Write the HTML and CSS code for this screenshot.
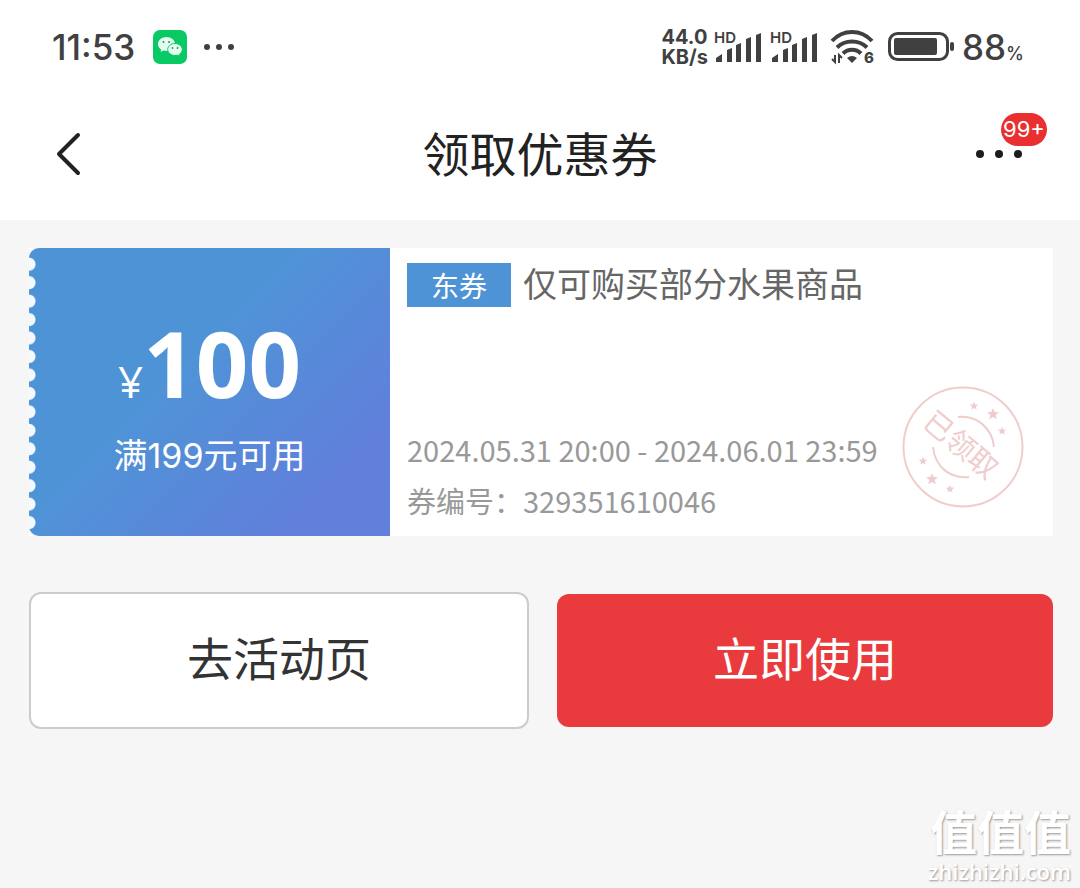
FILE: index.html
```html
<!DOCTYPE html>
<html lang="zh-CN">
<head>
    <meta charset="UTF-8">
    <meta name="viewport" content="width=device-width, initial-scale=1.0">
    <title>领取优惠券</title>
    <link rel="stylesheet" href="styles.css">
</head>
<body>
    <header class="top">
        <div class="status-bar">
            <div class="status-left">
                <span class="clock">11:53</span>
                <svg class="wechat" viewBox="0 0 34 34" width="34" height="34">
                    <rect width="34" height="34" rx="7" fill="#08c964"/>
                    <path d="M13.500 7C8.800 7 5 10.100 5 14c0 2.300 1.200 4.200 3.200 5.500L7.500 22l3-1.600c1 .3 2 .5 3 .5 4.700 0 8.500-3.100 8.500-7S18.200 7 13.500 7z" fill="#e4fdf0"/>
                    <path d="M22 13.500c-4 0-7.300 2.700-7.300 6s3.300 6 7.300 6c.9 0 1.700-.1 2.500-.4l2.500 1.400-.6-2.200c1.800-1.100 2.900-2.900 2.900-4.800 0-3.300-3.300-6-7.300-6z" fill="#e4fdf0" stroke="#08c964"/>
                    <g fill="#08a957">
                        <circle cx="10.500" cy="12" r="1"/><circle cx="16" cy="12" r="1"/>
                        <circle cx="19.500" cy="18" r=".9"/><circle cx="24.500" cy="18" r=".9"/>
                    </g>
                </svg>
                <svg viewBox="0 0 32 8" width="32" height="8" fill="#404040">
                    <circle cx="4" cy="4" r="3"/><circle cx="16" cy="4" r="3"/><circle cx="28" cy="4" r="3"/>
                </svg>
            </div>
            <div class="status-right">
                <div class="speed"><span>44.0</span><span>KB/s</span></div>
                <span class="signal">
                    <span class="hd">HD</span>
                    <svg viewBox="0 0 46 30" width="46" height="30" fill="#404040">
                        <path d="M0 30v-4l6-4v8zM11 30V18l5-2v14zM20 30V13l5-2v19zM30 30V7l5-2v25zM40 30V3l5-2v29z"/>
                    </svg>
                </span>
                <span class="signal">
                    <span class="hd">HD</span>
                    <svg viewBox="0 0 46 30" width="46" height="30" fill="#404040">
                        <path d="M0 30v-4l6-4v8zM11 30V18l5-2v14zM20 30V13l5-2v19zM30 30V7l5-2v25zM40 30V3l5-2v29z"/>
                    </svg>
                </span>
                <svg class="wifi" viewBox="0 0 46 36" width="46" height="36">
                    <g fill="none" stroke="#404040" stroke-width="4">
                        <path d="M2 12C13 0 31 0 42 12"/>
                        <path d="M7 18.500c8-8 22-8 30 0"/>
                        <path d="M13 24.500c5-5 13-5 18 0"/>
                    </g>
                    <path d="M17 29q5-4 10 0l-5 5z" fill="#404040"/>
                    <path d="M5 26v7l-3-3M9 34v-8l3 3" fill="none" stroke="#404040" stroke-width="2"/>
                    <text class="wifi-mark" x="34" y="34">6</text>
                </svg>
                <svg class="battery" viewBox="0 0 66 30" width="66" height="30">
                    <rect x="1.500" y="1.500" width="58" height="26" rx="8" fill="none" stroke="#404040" stroke-width="3"/>
                    <rect x="6" y="6" width="43" height="17" rx="2" fill="#404040"/>
                    <rect x="62" y="10" width="4" height="9" rx="2" fill="#404040"/>
                </svg>
                <span class="percent">88<small>%</small></span>
            </div>
        </div>
        <nav class="nav-bar">
            <button class="nav-button" type="button" aria-label="返回">
                <svg viewBox="0 0 26 44" width="26" height="44">
                    <path d="M23 3L4 22l19 19" fill="none" stroke="#222" stroke-width="4" stroke-linecap="round" stroke-linejoin="round"/>
                </svg>
            </button>
            <h1>领取优惠券</h1>
            <button class="nav-button more" type="button" aria-label="更多">
                <svg viewBox="0 0 48 10" width="48" height="10" fill="#1c1c1c">
                    <circle cx="5" cy="5" r="4"/><circle cx="24" cy="5" r="4"/><circle cx="43" cy="5" r="4"/>
                </svg>
                <span class="badge">99+</span>
            </button>
        </nav>
    </header>

    <main>
        <section class="coupon">
            <div class="coupon-value">
                <div class="amount"><span class="yen">¥</span>100</div>
                <div class="limit">满199元可用</div>
            </div>
            <div class="coupon-info">
                <div class="coupon-title">
                    <span class="tag">东券</span>
                    <h2>仅可购买部分水果商品</h2>
                </div>
                <div class="coupon-meta">
                    <p>2024.05.31 20:00 - 2024.06.01 23:59</p>
                    <p>券编号：329351610046</p>
                </div>
                <svg class="stamp" viewBox="0 0 122 122" width="122" height="122">
                    <defs>
                        <path id="star" d="M0-6l1.700 4 4.300.3-3.300 2.800 1.100 4.200L0 3l-3.800 2.300 1.100-4.200L-6-1.700l4.300-.3z"/>
                    </defs>
                    <g fill="none" stroke="#f0cdcd" stroke-width="2">
                        <circle cx="61" cy="61" r="59.500"/>
                        <path d="M56 31c19-2 34 11 36 30"/>
                        <path d="M31 61c2 19 16 32 36 30"/>
                    </g>
                    <g fill="#f0cdcd">
                        <use href="#star" transform="translate(91 28)"/>
                        <use href="#star" transform="translate(72 20) scale(.7)"/>
                        <use href="#star" transform="translate(100 45) scale(.7)"/>
                        <use href="#star" transform="translate(30 93)"/>
                        <use href="#star" transform="translate(21 75) scale(.7)"/>
                        <use href="#star" transform="translate(48 103) scale(.7)"/>
                    </g>
                    <text class="stamp-text" x="58" y="71" transform="rotate(40 61 61)">已领取</text>
                </svg>
            </div>
        </section>

        <div class="actions">
            <button class="btn btn-plain" type="button">去活动页</button>
            <button class="btn btn-primary" type="button">立即使用</button>
        </div>
    </main>

    <div class="watermark">
        <span class="watermark-name">值值值</span>
        <span class="watermark-site">zhizhizhi.com</span>
    </div>
</body>
</html>
```
FILE: styles.css
```css
* {
    box-sizing: border-box;
}

body {
    margin: 0;
    min-height: 100vh;
    position: relative;
    background: #f6f6f6;
    color: #222;
    font-family: "Noto Sans CJK SC", sans-serif;
}

h1, h2, p {
    margin: 0;
    font-weight: 400;
}

button {
    padding: 0;
    border: none;
    background: none;
    color: inherit;
    font-family: inherit;
    cursor: pointer;
}

svg {
    display: block;
}

.top {
    background: #fff;
}

/* Status bar */
.status-bar {
    display: flex;
    justify-content: space-between;
    align-items: center;
    height: 94px;
    padding: 0 56px 0 52px;
    color: #404040;
    font-family: Inter, sans-serif;
}

.status-left,
.status-right {
    display: flex;
    align-items: center;
}

.clock {
    font-size: 35px;
    font-weight: 500;
}

.wechat {
    margin: 0 16px 0 18px;
}

.speed {
    display: flex;
    flex-direction: column;
    margin-right: 6px;
    font-size: 20px;
    font-weight: 700;
    line-height: 20px;
}

.signal {
    position: relative;
    width: 48px;
    margin-right: 8px;
}

.signal svg {
    margin-left: 2px;
}

.hd {
    position: absolute;
    left: 0;
    top: -2px;
    font-size: 15px;
    font-weight: 600;
    line-height: 16px;
}

.wifi {
    margin: 0 12px 0 4px;
    overflow: visible;
}

.wifi-mark {
    font-size: 15px;
    font-weight: 800;
    fill: #404040;
}

.battery {
    margin-right: 8px;
}

.percent {
    font-size: 35px;
    font-weight: 500;
}

.percent small {
    font-size: 18px;
}

/* Navigation */
.nav-bar {
    display: flex;
    justify-content: space-between;
    align-items: center;
    height: 126px;
    padding: 0 55px 6px 55px;
}

.nav-bar h1 {
    padding-bottom: 4px;
    font-size: 47px;
    line-height: 60px;
}

.nav-button {
    display: flex;
    align-items: center;
    width: 50px;
    height: 60px;
}

.more {
    position: relative;
}

.badge {
    position: absolute;
    left: 26px;
    top: -11px;
    padding: 0 2px;
    border-radius: 17px;
    background: #e92f2f;
    color: #fff;
    font-family: Inter, sans-serif;
    font-size: 22px;
    line-height: 33px;
}

main {
    padding: 28px 27px 28px 29px;
}

/* Coupon */
.coupon {
    display: flex;
    min-height: 288px;
    background: #fff;
}

.coupon-value {
    position: relative;
    flex: 0 0 361px;
    display: flex;
    flex-direction: column;
    align-items: center;
    justify-content: center;
    padding-top: 10px;
    border-radius: 10px 0 0 10px;
    background: linear-gradient(135deg, #4f93d7 42%, #6080db 82%);
    color: #fff;
    box-shadow: -4px 0 0 #f6f6f6;
}

/* perforated edge */
.coupon-value::before {
    content: "";
    position: absolute;
    left: 0;
    top: 7px;
    bottom: 4px;
    width: 8px;
    background: radial-gradient(circle at 0 50%, #f3f9fd 6px, transparent 7px) 0 0 / 8px 18px round;
}

.amount {
    font-family: "Open Sans", sans-serif;
    font-size: 92px;
    font-weight: 700;
    line-height: 100px;
}

.yen {
    font-size: 44px;
    font-weight: 400;
}

.limit {
    font-size: 34px;
    line-height: 50px;
    font-family: Inter, "Noto Sans CJK SC", sans-serif;
}

.coupon-info {
    position: relative;
    flex: 1;
    display: flex;
    flex-direction: column;
    justify-content: space-between;
    padding: 12px 17px 10px;
}

.coupon-title {
    display: flex;
    align-items: center;
    gap: 12px;
}

.coupon-title h2 {
    padding-bottom: 4px;
    color: #666;
    font-size: 34px;
    line-height: 46px;
}

.tag {
    width: 104px;
    background: #4f93d7;
    color: #fff;
    font-size: 28px;
    line-height: 44px;
    text-align: center;
}

.coupon-meta {
    color: #999;
    font-size: 29px;
    line-height: 51px;
}

.stamp {
    position: absolute;
    right: 29px;
    bottom: 28px;
}

.stamp-text {
    fill: #f0cdcd;
    font-size: 29px;
    text-anchor: middle;
}

/* Buttons */
.actions {
    display: flex;
    align-items: center;
    gap: 28px;
    margin-top: 56px;
}

.btn {
    flex: 1;
    box-sizing: content-box;
    height: 123px;
    padding-bottom: 10px;
    border-radius: 12px;
    font-size: 46px;
    line-height: 60px;
}

.btn-plain {
    border: 2px solid #ccc;
    background: #fff;
    color: #333;
}

.btn-primary {
    background: #e93b3d;
    color: #fff;
}

/* Watermark */
.watermark {
    position: absolute;
    right: 9px;
    bottom: 3px;
    display: flex;
    flex-direction: column;
    align-items: flex-end;
    color: #fff;
    text-shadow: 1px 1px 2px #999;
}

.watermark-name {
    font-size: 47px;
    font-weight: 700;
    line-height: 54px;
}

.watermark-site {
    font-family: "Open Sans", sans-serif;
    font-size: 22px;
    font-weight: 600;
    line-height: 28px;
}
```
